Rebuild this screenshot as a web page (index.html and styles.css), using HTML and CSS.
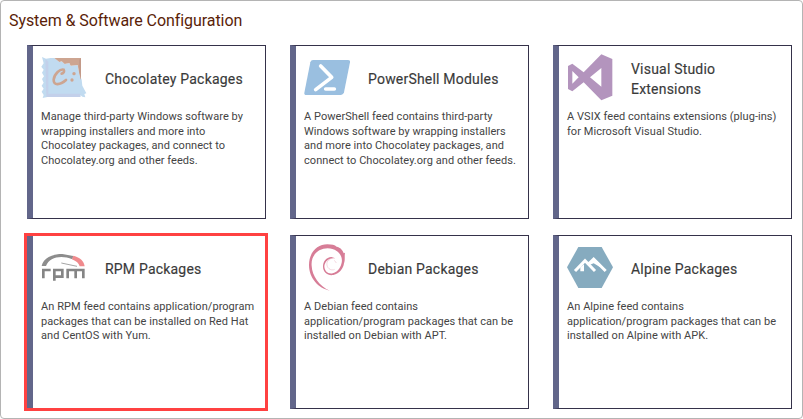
FILE: index.html
```html
<!DOCTYPE html>
<html lang="en">
<head>
    <meta charset="UTF-8">
    <meta name="viewport" content="width=device-width, initial-scale=1.0">
    <title>System &amp; Software Configuration</title>
    <link rel="stylesheet" href="styles.css">
</head>
<body>
    <div class="panel">
        <h1>System &amp; Software Configuration</h1>
        <div class="feeds">
            <div class="feed">
                <div class="feed-head">
                    <svg class="icon" viewBox="63 39 144 144">
                        <path fill="#c1dbf0" d="M66 51L78 56L92 54H103L111 60L118 66L125 64L134 72L148 69L152 77L173 75L176 92L179 105L185 119L187 137L199 160L193 162L196 172L187 170L181 165V171H82L68 174L71 165L65 155L71 146L65 137L71 128L66 117L72 109L66 98L71 89L64 80L71 70Z"/>
                        <path fill="#c3d0ea" d="M76 57L85 65V161H181V171H79Z"/>
                        <path fill="#cda591" d="M103 54H183V119L179 105L176 92L173 75L152 77L148 69L134 72L125 64L118 66Z"/>
                        <path fill="#c39a89" d="M183 54V119L177 94V60Z"/>
                        <path fill="none" stroke="#cda591" stroke-width="8" stroke-linecap="round" d="M125 101C131 100 134 94 131 89C121 86 103 101 101 119C100 138 121 135 138 120"/>
                        <ellipse cx="162" cy="101" rx="5" ry="5" fill="#cda591"/>
                        <ellipse cx="156" cy="120" rx="5" ry="5" fill="#cda591"/>
                    </svg>
                    <h2>Chocolatey Packages</h2>
                </div>
                <p>Manage third-party Windows software by wrapping installers and more into Chocolatey packages, and connect to Chocolatey.org and other feeds.</p>
            </div>
            <div class="feed">
                <div class="feed-head">
                    <svg class="icon" viewBox="42 39 144 144">
                        <path fill="#9abfe0" d="M69 60H174Q181 60 180 67L162 157Q160 165 153 165H49Q42 165 43 158L61 67Q63 60 69 60Z"/>
                        <path fill="none" stroke="#fff" stroke-width="11" stroke-linecap="round" stroke-linejoin="round" d="M92 78L125 112L77 149M107 147H133"/>
                    </svg>
                    <h2>PowerShell Modules</h2>
                </div>
                <p>A PowerShell feed contains third-party Windows software by wrapping installers and more into Chocolatey packages, and connect to Chocolatey.org and other feeds.</p>
            </div>
            <div class="feed">
                <div class="feed-head">
                    <svg class="icon" viewBox="51 39 144 144">
                        <path fill="#b394bd" fill-rule="evenodd" d="M154 43L187 57V167L154 181L101 127L67 154L54 147V78L67 71L101 97ZM154 84L120 112L154 140ZM67 93V131L86 112Z"/>
                    </svg>
                    <h2>Visual Studio Extensions</h2>
                </div>
                <p>A VSIX feed contains extensions (plug-ins) for Microsoft Visual Studio.</p>
            </div>
            <div class="feed selected">
                <div class="feed-head">
                    <svg class="icon" viewBox="63 39 144 144">
                        <path fill="#8d8d8d" d="M65 108C70 84 96 72 127 72L160 78L157 88C123 74 88 82 78 108Z"/>
                        <path fill="#f08a8d" d="M160 77C181 83 192 93 194 109H179C177 100 169 93 156 88Z"/>
                        <path fill="none" stroke="#777" stroke-width="2" d="M124 99L171 109"/>
                        <path fill="none" stroke="#858585" stroke-width="8" d="M70 145V120H92M103 152V120H127V140H104M143 145V120H190V145M167 120V145"/>
                    </svg>
                    <h2>RPM Packages</h2>
                </div>
                <p>An RPM feed contains application/program packages that can be installed on Red Hat and CentOS with Yum.</p>
            </div>
            <div class="feed">
                <div class="feed-head">
                    <svg class="icon" viewBox="42 39 144 144">
                        <path fill="#d77d97" d="M119 182C85 174 57 145 57 105C57 67 82 43 112 43C126 43 134 45 140 50C151 52 159 61 161 70L165 68C163 79 166 89 162 100C160 115 149 131 130 135C113 138 99 126 99 110C99 94 109 82 124 81L136 85C119 82 105 92 103 108C103 123 114 133 128 130C141 127 150 116 154 102C159 87 153 72 140 63C126 53 105 52 88 61C72 70 63 88 65 107C66 137 88 168 119 182Z"/>
                        <path fill="none" stroke="#e6b0c0" stroke-width="1.5" d="M121 88C108 91 108 109 117 116C121 120 130 121 134 118M133 91L139 99"/>
                    </svg>
                    <h2>Debian Packages</h2>
                </div>
                <p>A Debian feed contains application/program packages that can be installed on Debian with APT.</p>
            </div>
            <div class="feed">
                <div class="feed-head">
                    <svg class="icon" viewBox="51 39 144 144">
                        <path fill="#86abbf" d="M85 51H155L189 112L155 174H85L51 112Z"/>
                        <path fill="none" stroke="#fff" stroke-width="9" d="M75 123L105 92L135 123M117 101L131 87L167 123"/>
                        <path fill="#fff" d="M91 112L102 103V124H91ZM131 83L151 102V112L131 100L118 105Z"/>
                    </svg>
                    <h2>Alpine Packages</h2>
                </div>
                <p>An Alpine feed contains application/program packages that can be installed on Alpine with APK.</p>
            </div>
        </div>
    </div>
</body>
</html>
```
FILE: styles.css
```css
*, *::after {
    box-sizing: border-box;
}
body {
    margin: 0;
    font-family: Roboto, "Liberation Sans", sans-serif;
    background-color: #fff;
    color: #444;
}
.panel {
    width: 803px;
    height: 419px;
    padding: 10px 8px;
    border: 1px solid #b4b4b4;
    border-radius: 4px;
}
h1 {
    margin: 0;
    font-size: 16px;
    line-height: 20px;
    font-weight: 400;
    letter-spacing: -0.07px;
    color: #5a1e08;
}
.feeds {
    display: grid;
    grid-template-columns: repeat(3, 239px);
    grid-auto-rows: 174px;
    gap: 16px 24px;
    margin: 14px 0 0 18px;
}
.feed {
    position: relative;
    padding: 7px 7px 0 8px;
    border: 1px solid #35324a;
    border-left: 6px solid #62668a;
}
.feed.selected::after {
    content: "";
    position: absolute;
    top: -3px;
    left: -9px;
    width: 244px;
    height: 178px;
    border: 3px solid #ff4141;
}
.feed-head {
    display: flex;
    align-items: center;
    gap: 16px;
    height: 52px;
}
.icon {
    flex: none;
    width: 48px;
    height: 48px;
    margin-bottom: 4px;
}
h2 {
    margin: 0;
    max-width: 142px;
    font-size: 14px;
    line-height: 20px;
    font-weight: 400;
    letter-spacing: 0.2px;
    color: #3a3a3a;
    -webkit-text-stroke: 0.15px #3a3a3a;
}
p {
    margin: 5px 0 0;
    font-size: 11px;
    line-height: 14.67px;
    letter-spacing: 0.05px;
}
```
